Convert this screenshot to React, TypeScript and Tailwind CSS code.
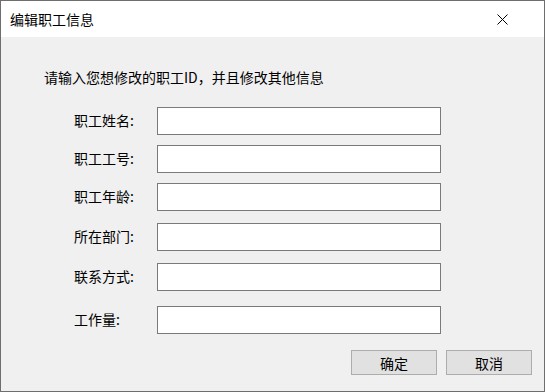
import React from "react";

const rows: { label: string; mt: string }[] = [
  { label: "职工姓名:", mt: "mt-[20px]" },
  { label: "职工工号:", mt: "mt-[10px]" },
  { label: "职工年龄:", mt: "mt-[10px]" },
  { label: "所在部门:", mt: "mt-[12px]" },
  { label: "联系方式:", mt: "mt-[12px]" },
  { label: "工作量:", mt: "mt-[15px]" },
];

export default function App() {
  return (
    <div className="w-[545px] h-[392px] border border-[#6e6e6e] bg-[#f0f0f0] flex flex-col font-['Noto_Sans_CJK_SC','Microsoft_YaHei',sans-serif] text-[14px] text-black overflow-hidden">
      <div className="h-[36px] bg-white flex items-center justify-between pl-[9px] pr-[36px] shrink-0">
        <span className="leading-[20px] mb-[1px]">编辑职工信息</span>
        <svg width="11" height="11" viewBox="0 0 11 11">
          <path d="M0.5 0.5 L10.5 10.5 M10.5 0.5 L0.5 10.5" stroke="#000" strokeWidth="1" fill="none" />
        </svg>
      </div>
      <div className="flex flex-col pl-[43px]">
        <div className="mt-[30px] leading-[20px] h-[20px]">请输入您想修改的职工ID，并且修改其他信息</div>
        {rows.map((r) => (
          <div key={r.label} className={`flex items-center ${r.mt}`}>
            <div className="w-[113px] shrink-0 pl-[30px] leading-[20px] mb-[3px] whitespace-nowrap">{r.label}</div>
            <div className="w-[284px] h-[28px] shrink-0 bg-white border border-[#7a7a7a]" />
          </div>
        ))}
        <div className="flex justify-end gap-[9px] mt-[16px] pr-[12px]">
          <button className="w-[86px] h-[25px] bg-[#e1e1e1] border border-[#adadad] leading-[20px]">确定</button>
          <button className="w-[86px] h-[25px] bg-[#e1e1e1] border border-[#adadad] leading-[20px]">取消</button>
        </div>
      </div>
    </div>
  );
}
